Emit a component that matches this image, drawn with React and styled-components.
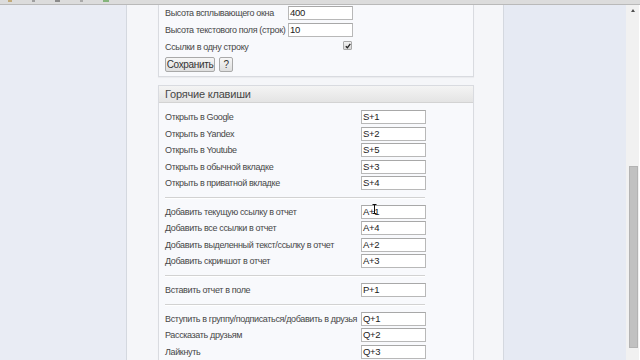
import styled, { createGlobalStyle } from "styled-components";

const GlobalStyle = createGlobalStyle`
  html, body {
    margin: 0;
    padding: 0;
    overflow: hidden;
  }
  body {
    font-family: "Liberation Sans", Arial, sans-serif;
  }
`;

const Screen = styled.div`
  width: 640px;
  height: 360px;
  display: flex;
  flex-direction: column;
  overflow: hidden;
`;

/* нижний край панели браузера */
const TopStrip = styled.div`
  height: 4px;
  flex: none;
  background: #dcdcdc;
  border-bottom: 1px solid #b9b9b9;
  display: flex;
  align-items: flex-start;
  gap: 20px;
  padding-left: 8px;
  overflow: hidden;
`;

const StripMark = styled.span`
  width: ${(p) => p.w || 4}px;
  height: 2px;
  background: ${(p) => p.c};
  opacity: 0.6;
`;

const Main = styled.div`
  flex: 1;
  display: flex;
  min-height: 0;
`;

const Side = styled.div`
  width: ${(p) => p.w}px;
  flex: none;
  background: ${(p) => p.bg};
`;

const Column = styled.div`
  width: 376px;
  flex: none;
  background: #f5f6f9;
  border-left: 1px solid #d4d8df;
  border-right: 1px solid #d4d8df;
  overflow: hidden;
`;

const Inner = styled.div`
  margin-top: -10px;
  padding-left: 31px;
  display: flex;
  flex-direction: column;
  gap: 8px;
`;

const Panel = styled.div`
  width: 314px;
  background: #f8f9fc;
  border: 1px solid #d9dbe0;
  box-shadow: 0 1px 1px rgba(0, 0, 0, 0.04);
`;

const SettingsBody = styled.div`
  padding: 8.5px 0 4px 6px;
`;

const PanelHeader = styled.div`
  height: 17px;
  display: flex;
  align-items: center;
  padding: 0 0 1px 6px;
  box-sizing: border-box;
  background: linear-gradient(#f4f4f4, #e4e4e4);
  border-bottom: 1px solid #d3d3d3;
  font-size: 11px;
  letter-spacing: -0.2px;
  color: #464646;
`;

const HotkeysBody = styled.div`
  padding: 5.75px 0 0 6px;
`;

const Row = styled.div`
  height: ${(p) => p.h}px;
  display: flex;
  align-items: center;
  position: relative;
`;

const Label = styled.span`
  width: ${(p) => p.w}px;
  flex: none;
  font-size: 9px;
  letter-spacing: -0.36px;
  color: #474747;
  white-space: nowrap;
`;

const Input = styled.div`
  width: 62px;
  height: 12px;
  border: 1px solid #b8b8b8;
  border-top-color: #a8a8a8;
  background: #fff;
  font-size: 9.5px;
  letter-spacing: -0.3px;
  line-height: 12px;
  color: #222;
  padding-left: 1px;
`;

const Check = styled.span`
  width: 7px;
  height: 7px;
  margin-left: 55px;
  margin-top: -3px;
  border: 1px solid #a9a9a9;
  border-radius: 1px;
  background: linear-gradient(#f2f2f2, #d6d6d6);
  display: flex;
  align-items: center;
  justify-content: center;
`;

const Buttons = styled.div`
  display: flex;
  gap: 4px;
  margin-top: 1.5px;
`;

const Button = styled.button`
  width: ${(p) => p.w}px;
  height: 15px;
  padding: 0;
  border: 1px solid #a9a9a9;
  border-radius: 2px;
  background: linear-gradient(#f7f7f7, #dedede);
  font-family: "Liberation Sans", Arial, sans-serif;
  font-size: 10px;
  letter-spacing: -0.35px;
  color: #333;
  line-height: 13px;
`;

const Separator = styled.div`
  width: 260px;
  margin: 5.25px 0 5px;
  border-top: 1px solid #d2d2d2;
  border-bottom: 1px solid #ffffff;
`;

const Cursor = styled.svg`
  position: absolute;
  left: 207px;
  top: 0px;
`;

const Scrollbar = styled.div`
  width: 13px;
  flex: none;
  background: #f1f1f1;
  display: flex;
  flex-direction: column;
  align-items: center;
`;

const Arrow = styled.span`
  margin-top: 4px;
  width: 0;
  height: 0;
  border-left: 2.5px solid transparent;
  border-right: 2.5px solid transparent;
  border-bottom: 3px solid #505050;
`;

const Thumb = styled.div`
  margin-top: 154px;
  width: 7px;
  height: 180px;
  margin-left: 2px;
  background: #c1c1c1;
  border: 1px solid #b3b3b3;
`;

const groups = [
  [
    ["Открыть в Google", "S+1"],
    ["Открыть в Yandex", "S+2"],
    ["Открыть в Youtube", "S+5"],
    ["Открыть в обычной вкладке", "S+3"],
    ["Открыть в приватной вкладке", "S+4"],
  ],
  [
    ["Добавить текущую ссылку в отчет", "A+1"],
    ["Добавить все ссылки в отчет", "A+4"],
    ["Добавить выделенный текст/ссылку в отчет", "A+2"],
    ["Добавить скриншот в отчет", "A+3"],
  ],
  [["Вставить отчет в поле", "P+1"]],
  [
    ["Вступить в группу/подписаться/добавить в друзья", "Q+1"],
    ["Рассказать друзьям", "Q+2"],
    ["Лайкнуть", "Q+3"],
  ],
];

export default function App() {
  return (
    <Screen>
      <GlobalStyle />
      <TopStrip>
        <StripMark c="#b08a3a" />
        <StripMark c="#777" w={3} />
        <StripMark c="#555" w={5} />
        <StripMark c="#888" w={3} />
        <StripMark c="#4b9a3a" w={6} />
      </TopStrip>
      <Main>
        <Side w={126} bg="#e9ecf4" />
        <Column>
          <Inner>
            <Panel>
              <SettingsBody>
                <Row h={17}>
                  <Label w={123}>Высота всплывающего окна</Label>
                  <Input>400</Input>
                </Row>
                <Row h={17}>
                  <Label w={123}>Высота текстового поля (строк)</Label>
                  <Input>10</Input>
                </Row>
                <Row h={17}>
                  <Label w={123}>Ссылки в одну строку</Label>
                  <Check>
                    <svg width="6" height="6" viewBox="0 0 6 6">
                      <path d="M0.8 3.2 L2.4 4.8 L5.3 0.9" stroke="#222" strokeWidth="1.3" fill="none" />
                    </svg>
                  </Check>
                </Row>
                <Buttons>
                  <Button w={50}>Сохранить</Button>
                  <Button w={14}>?</Button>
                </Buttons>
              </SettingsBody>
            </Panel>
            <Panel>
              <PanelHeader>Горячие клавиши</PanelHeader>
              <HotkeysBody>
                {groups.map((g, gi) => (
                  <div key={gi}>
                    {gi > 0 && <Separator />}
                    {g.map(([label, key]) => (
                      <Row h={16.5} key={label}>
                        <Label w={196}>{label}</Label>
                        <Input>{key}</Input>
                        {key === "A+1" && (
                          <Cursor width="5" height="10" viewBox="0 0 5 10">
                            <path d="M0.5 0.5 H4.5 M2.5 0.5 V9.5 M0.5 9.5 H4.5" stroke="#111" strokeWidth="1" fill="none" />
                          </Cursor>
                        )}
                      </Row>
                    ))}
                  </div>
                ))}
              </HotkeysBody>
            </Panel>
          </Inner>
        </Column>
        <Side w={122} bg="#e6eaf3" />
        <Scrollbar>
          <Arrow />
          <Thumb />
        </Scrollbar>
      </Main>
    </Screen>
  );
}
